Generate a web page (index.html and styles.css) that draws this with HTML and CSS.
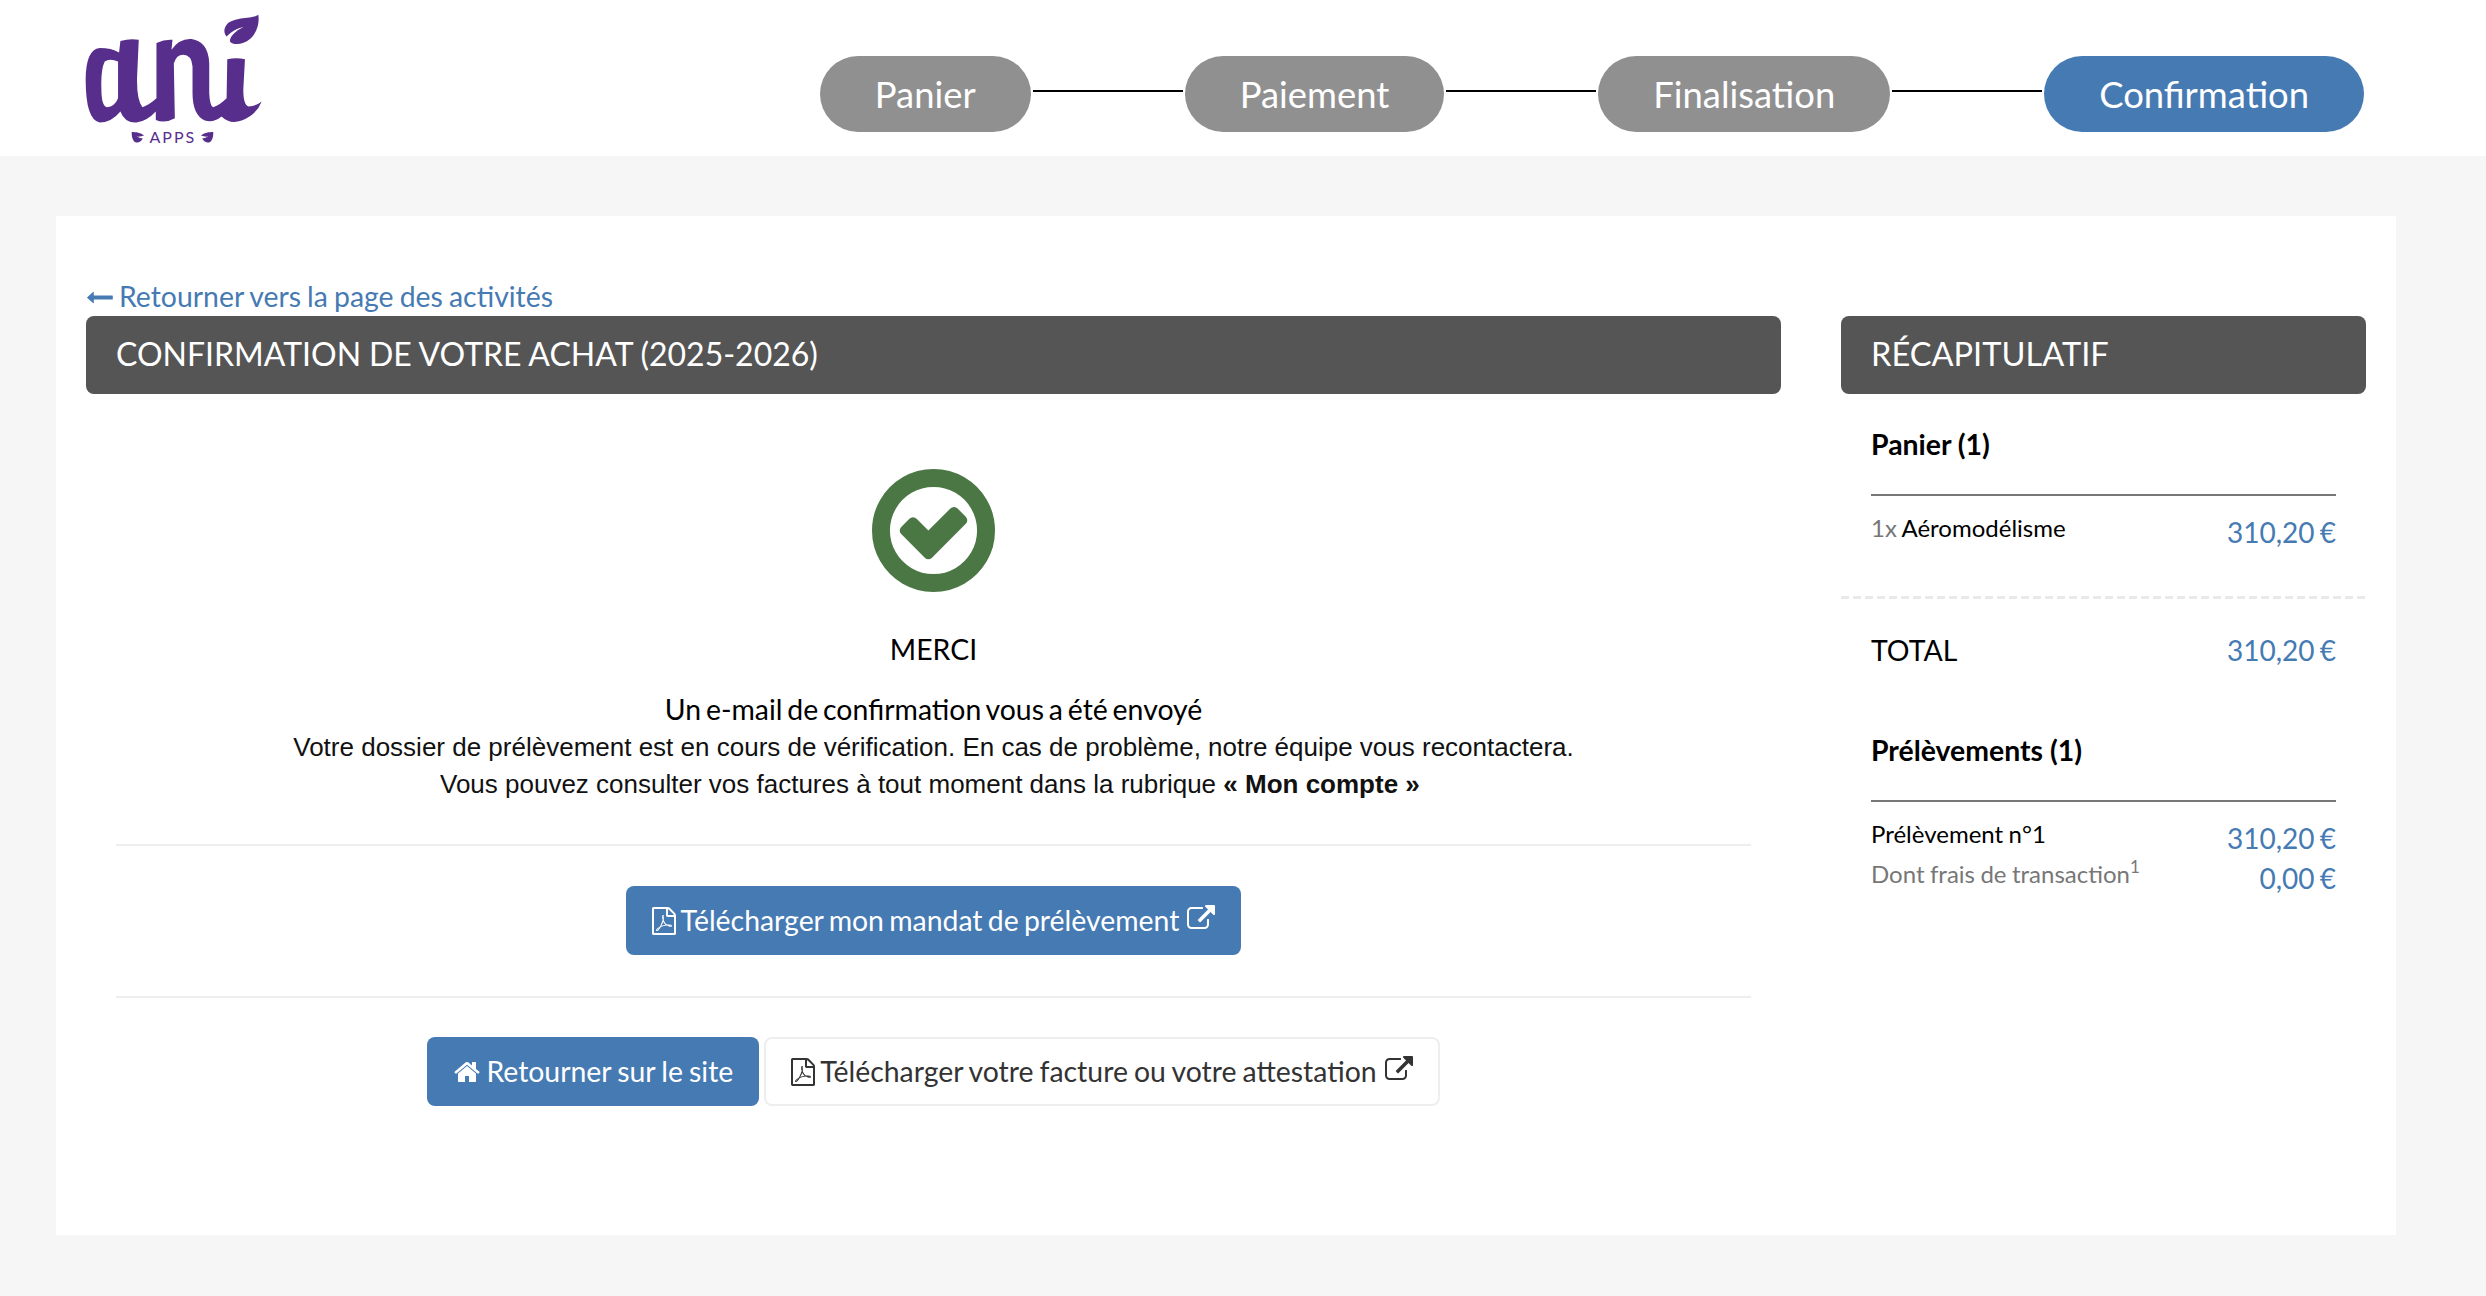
FILE: index.html
```html
<!DOCTYPE html>
<html lang="fr">
<head>
<meta charset="utf-8">
<title>Confirmation</title>
<link rel="stylesheet" href="styles.css">
</head>
<body>
<svg class="defs" aria-hidden="true">
  <symbol id="i-pdf" viewBox="128 0 1536 1792"><path d="M1596 380q28 28 48 76t20 88v1152q0 40-28 68t-68 28h-1344q-40 0-68-28t-28-68v-1600q0-40 28-68t68-28h896q40 0 88 20t76 48zm-444-244v376h376q-10-29-22-41l-313-313q-12-12-41-22zm384 1528v-1024h-416q-40 0-68-28t-28-68v-416h-768v1536h1280zm-514-593q33 26 84 56 59-7 117-7 147 0 177 49 16 22 2 52 0 1-1 2l-2 2v1q-6 38-71 38-48 0-115-20t-130-53q-221 24-392 83-153 262-242 262-15 0-28-7l-24-12q-1-1-6-5-10-10-6-36 9-40 56-91.500t132-96.500q14-9 23 6 2 2 2 4 52-85 107-197 68-136 104-262-24-82-30.500-159.500t6.500-127.500q11-40 42-40h22q23 0 35 15 18 21 9 68-2 6-4 8 1 3 1 8v30q-2 123-14 192 55 164 146 238zm-576 411q52-24 137-158-51 40-87.500 84t-49.500 74zm398-920q-15 42-2 132 1-7 7-44 0-3 7-43 1-4 4-8-1-1-1-2-1-2-1-3-1-22-13-36 0 1-1 2v2zm-124 661q135-54 284-81-2-1-13-9.500t-16-13.500q-76-67-127-176-27 86-83 197-30 56-45 83zm646-16q-24-24-140-24 76 28 124 28 14 0 18-1 0-1-2-3z"/></symbol>
  <symbol id="i-ext" viewBox="0 0 1792 1792"><path d="M1408 928v320q0 119-84.500 203.500t-203.500 84.500h-832q-119 0-203.500-84.500t-84.500-203.500v-832q0-119 84.500-203.500t203.500-84.500h704q14 0 23 9t9 23v64q0 14-9 23t-23 9h-704q-66 0-113 47t-47 113v832q0 66 47 113t113 47h832q66 0 113-47t47-113v-320q0-14 9-23t23-9h64q14 0 23 9t9 23zm384-864v512q0 26-19 45t-45 19-45-19l-176-176-652 652q-10 10-23 10t-23-10l-114-114q-10-10-10-23t10-23l652-652-176-176q-19-19-19-45t19-45 45-19h512q26 0 45 19t19 45z"/></symbol>
  <symbol id="i-home" viewBox="0 0 1792 1792"><path d="M1472 992v480q0 26-19 45t-45 19h-384v-384h-256v384h-384q-26 0-45-19t-19-45v-480q0-1 .5-3t.5-3l575-474 575 474q1 2 1 6zm223-69l-62 74q-8 9-21 11h-3q-13 0-21-7l-692-577-692 577q-12 8-24 7-13-2-21-11l-62-74q-8-10-7-23.500t11-21.500l719-599q32-26 76-26t76 26l244 204v-195q0-14 9-23t23-9h192q14 0 23 9t9 23v408l219 182q10 8 11 21.500t-7 23.500z"/></symbol>
</svg>

<header class="topbar">
  <svg class="logo" viewBox="250 40 545 395" role="img" aria-label="ani apps">
    <path fill-rule="evenodd" d="M362 124Q390 115 417 120L412 230Q410 300 428 322Q448 315 470 295L470 130Q495 118 518 120L515 150Q540 115 575 118Q625 125 628 190L628 280Q630 320 640 322Q660 315 680 295L682 178Q710 172 735 178L730 270Q730 315 745 320Q770 318 785 305Q770 345 725 362Q690 375 665 350Q640 370 615 362Q578 345 578 280L578 200Q575 165 550 165Q530 165 522 190L525 355Q495 372 468 360L468 335Q440 365 410 368Q375 370 362 335Q335 368 300 368Q258 360 258 240Q258 150 300 145Q335 145 358 158ZM355 185Q330 175 315 185Q303 210 305 265Q305 320 322 322Q345 320 355 295Z"/>
    <path d="M775 45C760 58 700 50 680 75C668 92 675 105 680 110C695 95 712 85 730 82C705 95 690 110 690 125C700 138 730 135 750 118C775 95 778 65 775 45Z"/>
    <path d="M396 396C408 396 424 398 433 407C425 410 418 411 411 410C418 414 424 415 429 416C424 425 415 430 407 427C399 423 395 408 396 396Z"/>
    <path d="M640 396C628 396 612 398 603 407C611 410 618 411 625 410C618 414 612 415 607 416C612 425 621 430 629 427C637 423 641 408 640 396Z"/>
    <text class="logo-apps" x="449" y="430">APPS</text>
  </svg>
  <nav class="steps">
    <span class="step">Panier</span><i class="link"></i>
    <span class="step">Paiement</span><i class="link"></i>
    <span class="step">Finalisation</span><i class="link"></i>
    <span class="step step-on">Confirmation</span>
  </nav>
</header>

<main class="card">
  <a class="back" href="#"><svg class="arrow" viewBox="0 256 1792 1280"><path d="M1792 800v192q0 14-9 23t-23 9h-1248v224q0 21-19 29t-35-5l-384-350q-10-10-10-23 0-14 10-24l384-354q16-14 35-6 19 9 19 29v224h1248q14 0 23 9t9 23z"/></svg>Retourner vers la page des activités</a>
  <div class="columns">
    <section class="left">
      <h1 class="bar bar-main">CONFIRMATION DE VOTRE ACHAT (2025-2026)</h1>
      <div class="body">
        <svg class="ok" viewBox="128 128 1536 1536"><path d="M1299 813l-422 422q-19 19-45 19t-45-19l-294-294q-19-19-19-45t19-45l102-102q19-19 45-19t45 19l147 147 275-275q19-19 45-19t45 19l102 102q19 19 19 45t-19 45zm141 83q0-148-73-273t-198-198-273-73-273 73-198 198-73 273 73 273 198 198 273 73 273-73 198-198 73-273zm224 0q0 209-103 385.500t-279.500 279.500-385.500 103-385.500-103-279.500-279.500-103-385.500 103-385.500 279.500-279.500 385.500-103 385.500 103 279.500 279.500 103 385.500z"/></svg>
        <p class="merci">MERCI</p>
        <p class="mail">Un e-mail de confirmation vous a été envoyé</p>
        <p class="note">Votre dossier de prélèvement est en cours de vérification. En cas de problème, notre équipe vous recontactera.</p>
        <p class="note">Vous pouvez consulter vos factures à tout moment dans la rubrique <b>« Mon compte »</b>&nbsp;</p>
        <div class="row row-first">
          <a class="btn btn-blue btn-mandate" href="#"><svg class="ic ic-pdf"><use href="#i-pdf"/></svg>Télécharger mon mandat de prélèvement<svg class="ic ic-ext"><use href="#i-ext"/></svg></a>
        </div>
        <div class="row row-last">
          <a class="btn btn-blue" href="#"><svg class="ic ic-home"><use href="#i-home"/></svg>Retourner sur le site</a>
          <a class="btn btn-white" href="#"><svg class="ic ic-pdf"><use href="#i-pdf"/></svg>Télécharger votre facture ou votre attestation<svg class="ic ic-ext"><use href="#i-ext"/></svg></a>
        </div>
      </div>
    </section>
    <aside class="right">
      <h2 class="bar">RÉCAPITULATIF</h2>
      <div class="recap recap-cart">
        <h3 class="recap-title">Panier (1)</h3>
        <div class="line line-first"><span class="label"><span class="muted">1x</span> Aéromodélisme</span><span class="price">310,20 €</span></div>
      </div>
      <div class="total"><span>TOTAL</span><span class="price">310,20 €</span></div>
      <div class="recap">
        <h3 class="recap-title recap-title-pay">Prélèvements (1)</h3>
        <div class="line line-first"><span class="label">Prélèvement n°1</span><span class="price">310,20 €</span></div>
        <div class="line"><span class="label muted">Dont frais de transaction<sup>1</sup></span><span class="price">0,00 €</span></div>
      </div>
    </aside>
  </div>
</main>
</body>
</html>
```

FILE: styles.css
```css
* { box-sizing: border-box; }
html, body { margin: 0; padding: 0; }
body {
  height: 1296px;
  overflow: hidden;
  background: #f6f6f6;
  font-family: Lato, "Liberation Sans", sans-serif;
  font-size: 28.4px;
  word-spacing: -0.07em;
  color: #000;
}
a { text-decoration: none; }
.defs { display: none; }

.topbar {
  height: 156px;
  background: #fff;
  display: flex;
  justify-content: space-between;
  padding: 13px 122px 0 83px;
}
.logo { width: 182px; height: 132px; fill: #572e8c; }
.logo-apps { font: 400 48px Lato, sans-serif; letter-spacing: 6px; fill: #572e8c; }

.steps { display: flex; align-items: center; height: 76px; margin-top: 43px; }
.step {
  height: 76px;
  line-height: 76px;
  padding: 0 55px;
  border-radius: 38px;
  background: #909090;
  color: #fff;
  font-size: 36.4px;
}
.step-on { background: #467ab3; }
.link { display: block; width: 150px; height: 2px; margin: 0 2px 6px; background: #000; }

.card {
  margin: 60px 90px 0 56px;
  height: 1019px;
  background: #fff;
  padding: 60px 30px 0;
}
.back { display: block; height: 40px; line-height: 40px; color: #467ab3; word-spacing: -0.04em; }
.arrow { width: 27px; height: 19px; fill: #467ab3; margin-right: 6px; }

.columns { display: flex; justify-content: space-between; }
.left { width: 1695px; }
.right { width: 525px; }
.bar {
  margin: 0;
  height: 78px;
  line-height: 76px;
  padding: 0 30px;
  border-radius: 8px;
  background: #555;
  color: #fff;
  font-size: 32.6px;
  font-weight: 400;
  word-spacing: 0;
}
.bar-main { font-size: 32px; word-spacing: -0.01em; }

.body { padding: 75px 30px 0; text-align: center; display: flex; flex-direction: column; align-items: stretch; }
.ok { display: block; width: 123px; height: 123px; fill: #4b7744; margin: 0 auto; }
.merci { margin: 39px 0 0; line-height: 36px; }
.mail { margin: 22px 0 0; line-height: 40px; word-spacing: -0.085em; }
.note { margin: 0; font: 26px/37px "Liberation Sans", sans-serif; word-spacing: 0; color: #111; }

.row { display: flex; justify-content: center; gap: 5px; border-top: 2px solid #eee; }
.row-first { margin-top: 41px; padding: 40px 0 41px; }
.row-last { padding-top: 39px; }
.btn {
  height: 69px;
  display: flex;
  align-items: center;
  padding: 0 25px 2px;
  border-radius: 8px;
  word-spacing: -0.04em;
}
.btn-blue { background: #467ab3; color: #fff; fill: #fff; padding: 0 26px 2px; }
.btn-mandate { word-spacing: -0.07em; }
.btn-white { background: #fff; color: #333; fill: #333; border: 2px solid #eee; }
.ic { flex: none; }
.ic-pdf { width: 24px; height: 28px; margin: 2px 5px 0 0; }
.ic-ext { width: 28px; height: 28px; margin: -2px 0 0 8px; }
.ic-home { width: 28px; height: 28px; margin: 2px 5px 0 0; }

.recap { padding: 0 30px; }
.recap-cart {
  height: 205px;
  background: repeating-linear-gradient(90deg, #e9e9e9 0 8px, transparent 8px 12px) left bottom / 100% 3px no-repeat;
}
.recap-title {
  margin: 0;
  height: 102px;
  padding-top: 32px;
  line-height: 36px;
  font-size: 28.4px;
  font-weight: 700;
  word-spacing: 0;
  border-bottom: 2px solid #777;
}
.recap-title-pay { height: 103px; padding-top: 33px; }
.line { display: flex; justify-content: space-between; align-items: flex-start; font-size: 24px; word-spacing: -0.03em; }
.line-first { padding-top: 16px; }
.label { line-height: 32px; }
.muted { color: #777; }
.price { color: #467ab3; font-size: 28px; line-height: 40px; word-spacing: -0.07em; }
sup { font-size: 17px; line-height: 0; vertical-align: baseline; position: relative; top: -10px; }
.total {
  display: flex;
  justify-content: space-between;
  padding: 31px 30px 0;
  height: 100px;
  line-height: 40px;
}
```
